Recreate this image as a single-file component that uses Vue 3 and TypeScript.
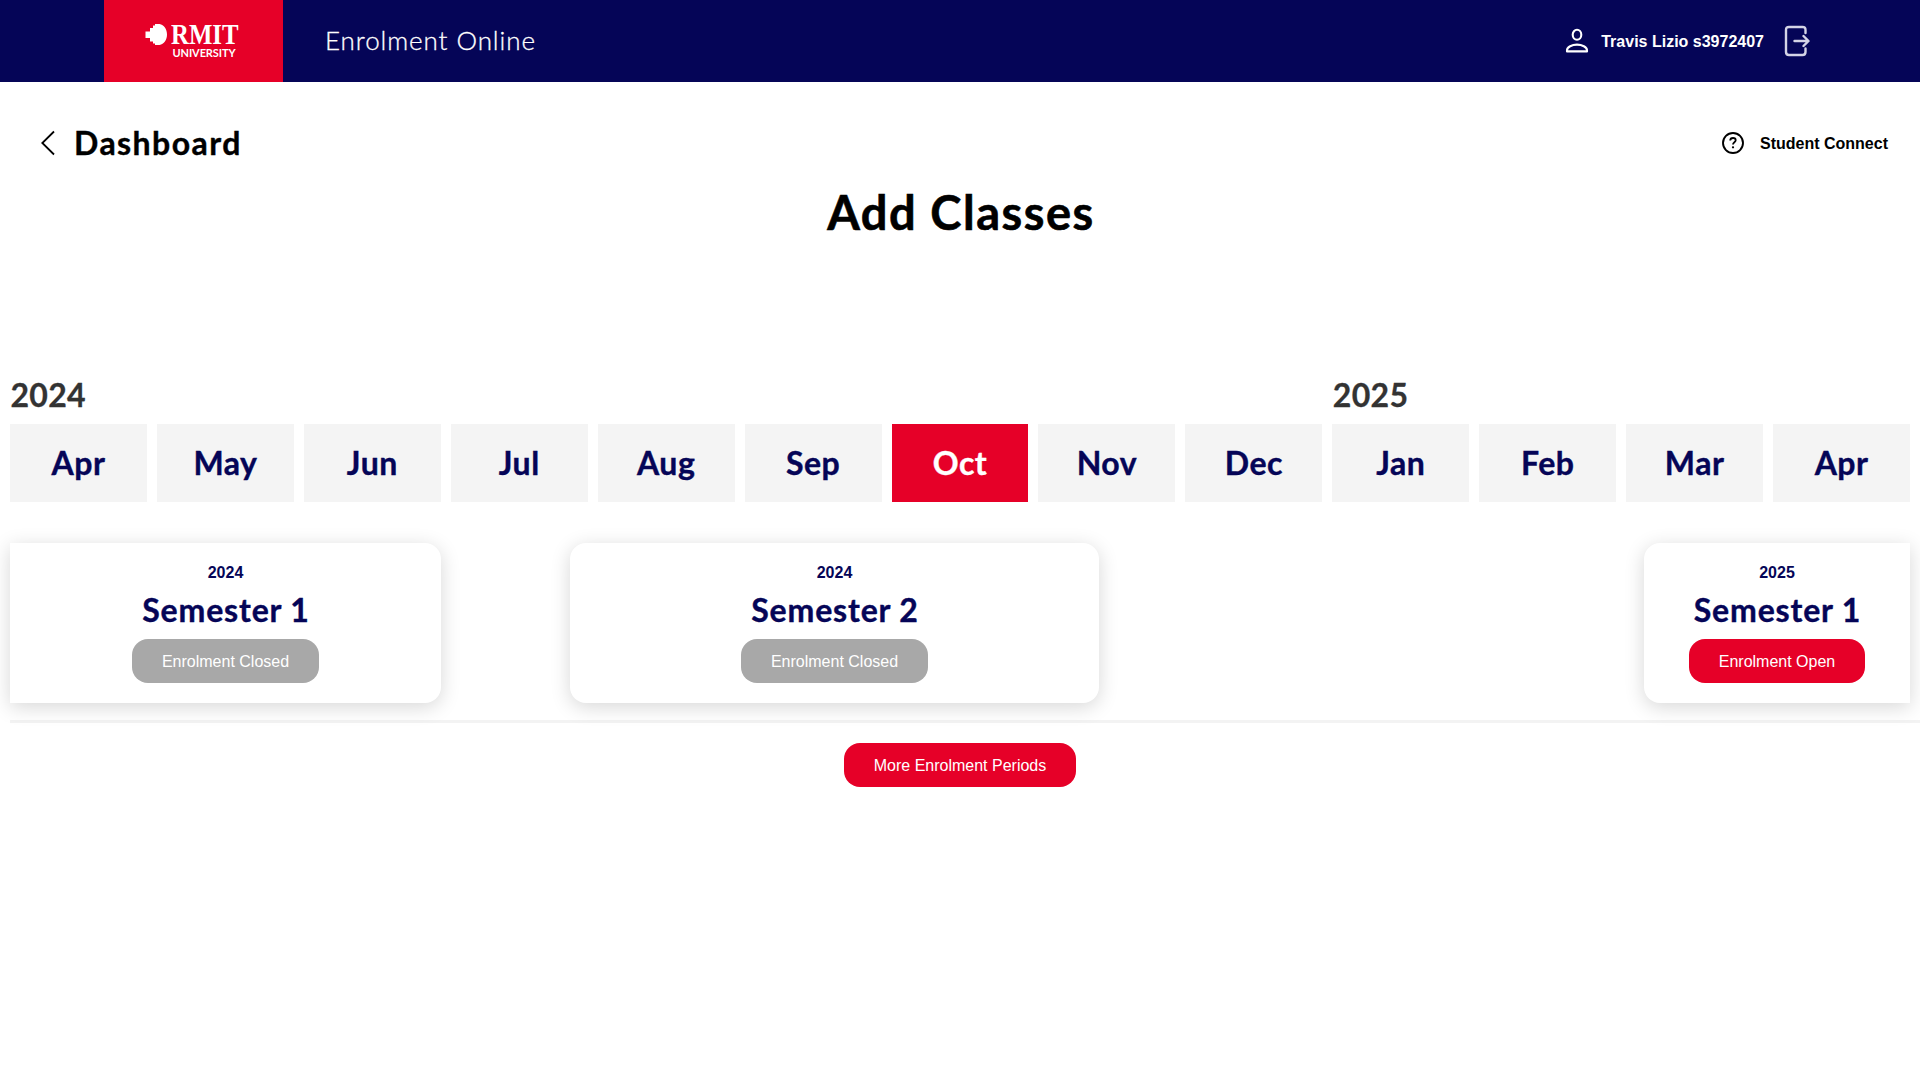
<script setup lang="ts">
interface Month {
  name: string
  year?: string
  current?: boolean
}

interface Period {
  year: string
  title: string
  status: string
  open: boolean
  edge: 'start' | 'middle' | 'end'
}

const months: Month[] = [
  { name: 'Apr', year: '2024' },
  { name: 'May' },
  { name: 'Jun' },
  { name: 'Jul' },
  { name: 'Aug' },
  { name: 'Sep' },
  { name: 'Oct', current: true },
  { name: 'Nov' },
  { name: 'Dec' },
  { name: 'Jan', year: '2025' },
  { name: 'Feb' },
  { name: 'Mar' },
  { name: 'Apr' },
]

const periods: Period[] = [
  { year: '2024', title: 'Semester 1', status: 'Enrolment Closed', open: false, edge: 'start' },
  { year: '2024', title: 'Semester 2', status: 'Enrolment Closed', open: false, edge: 'middle' },
  { year: '2025', title: 'Semester 1', status: 'Enrolment Open', open: true, edge: 'end' },
]
</script>

<template>
  <div class="page">
    <header class="topbar">
      <div class="brand">
        <svg class="brand-mark" width="23" height="22" viewBox="0 0 23 22" aria-hidden="true">
          <path
            fill="#fff"
            d="M8 1.500h2V0h4.500C19 1 22 5 22 10.500S19 20 14.500 21H10v-1.500H8v-2H5V14H.500V7.500H5V4h3z"
          />
        </svg>
        <div class="brand-text">
          <span class="brand-name">RMIT</span>
          <span class="brand-sub">UNIVERSITY</span>
        </div>
      </div>
      <span class="app-name">Enrolment Online</span>
      <div class="account">
        <svg class="user-icon" width="24" height="26" viewBox="0 0 24 26" fill="none" stroke="#fff" stroke-width="2.100">
          <ellipse cx="12" cy="6.800" rx="4.300" ry="5" />
          <path d="M2 23.400v-1.200c0-3.200 5-5.600 10-5.600s10 2.400 10 5.600v1.200z" stroke-linejoin="round" />
        </svg>
        <span class="user">Travis Lizio s3972407</span>
        <svg width="26" height="32" viewBox="0 0 26 32" fill="none" stroke="#d4d4e6" stroke-width="2.400" stroke-linecap="round" stroke-linejoin="round">
          <path d="M21.500 8V5q0-3-3-3H5Q2 2 2 5v22q0 3 3 3h13.500q3 0 3-3v-3.500" />
          <path d="M10.500 16H24M19.500 11l5 5-5 5" />
        </svg>
      </div>
    </header>

    <div class="subnav">
      <a class="back">
        <svg width="16" height="26" viewBox="0 0 16 26" fill="none" stroke="#000" stroke-width="1.800">
          <path d="M14 1.500 2.300 13 14 24.500" />
        </svg>
        <span>Dashboard</span>
      </a>
      <a class="help">
        <svg width="22" height="22" viewBox="0 0 22 22" fill="none" stroke="#000">
          <circle cx="11" cy="11" r="10" stroke-width="1.900" />
          <path d="M8.200 8.500Q8.300 6 11 6t2.700 2.300c0 1.900-2.700 2-2.700 4.200" stroke-width="1.800" />
          <circle cx="11" cy="15.300" r="1.150" fill="#000" stroke="none" />
        </svg>
        <span>Student Connect</span>
      </a>
    </div>

    <h1 class="title">Add Classes</h1>

    <section class="timeline">
      <div class="months">
        <div v-for="(m, i) in months" :key="i" class="column">
          <div class="year">{{ m.year }}</div>
          <div class="month" :class="{ current: m.current }">{{ m.name }}</div>
        </div>
      </div>
      <div class="periods">
        <article v-for="(p, i) in periods" :key="i" class="period" :class="p.edge">
          <div class="period-year">{{ p.year }}</div>
          <div class="period-title">{{ p.title }}</div>
          <button class="pill" :class="{ closed: !p.open }">{{ p.status }}</button>
        </article>
      </div>
    </section>

    <div class="more">
      <button class="pill">More Enrolment Periods</button>
    </div>
  </div>
</template>

<style>
body {
  margin: 0;
  background: #fff;
}
</style>

<style scoped>
.page {
  width: 1920px;
  height: 1080px;
  overflow: hidden;
  font-family: 'Liberation Sans', Arial, sans-serif;
  font-size: 16px;
  color: #000;
  background: #fff;
}
.topbar {
  box-sizing: border-box;
  height: 82px;
  padding: 0 110px 0 104px;
  display: flex;
  align-items: center;
  background: #050557;
  color: #fff;
}
.brand {
  box-sizing: border-box;
  width: 179px;
  height: 82px;
  padding: 24px 0 0 41px;
  display: flex;
  align-items: flex-start;
  background: #e60028;
}
.brand-mark {
  flex: none;
  margin-right: 3px;
}
.brand-text {
  display: flex;
  flex-direction: column;
  align-items: flex-start;
}
.brand-name {
  height: 20px;
  font: bold 29px/20px 'Liberation Serif', serif;
  transform: scaleX(0.855);
  transform-origin: 0 0;
}
.brand-sub {
  height: 12px;
  margin: 3px 0 0 1.500px;
  font: bold 11px/12px Lato, sans-serif;
  letter-spacing: -0.1px;
}
.app-name {
  margin-left: 42px;
  padding-bottom: 3px;
  font: 300 26px/32px Lato, sans-serif;
  letter-spacing: 0.92px;
  -webkit-text-stroke: 0.3px #fff;
}
.account {
  margin-left: auto;
  display: flex;
  align-items: center;
  font-weight: bold;
}
.user-icon {
  margin-right: 12px;
}
.user {
  margin-right: 20px;
  padding-top: 2px;
}
.subnav {
  box-sizing: border-box;
  height: 92px;
  padding: 30px 32px 0 40px;
  display: flex;
  align-items: center;
  justify-content: space-between;
}
.back,
.help {
  display: flex;
  align-items: center;
}
.back {
  gap: 18px;
  font: bold 32px/40px Lato, sans-serif;
  letter-spacing: 1.45px;
  -webkit-text-stroke: 0.4px currentColor;
}
.help {
  gap: 16px;
  font-weight: bold;
}
.help span {
  padding-top: 2px;
}
.title {
  margin: 8px 0 0;
  height: 60px;
  text-align: center;
  font: bold 47px/60px Lato, sans-serif;
  letter-spacing: 1.55px;
  text-indent: 2px;
  -webkit-text-stroke: 0.6px currentColor;
}
.timeline {
  margin: 132px 0 0 10px;
  border-bottom: 3px solid #f3f3f3;
}
.months {
  display: grid;
  grid-template-columns: repeat(13, 1fr);
  gap: 10px;
  margin-right: 10px;
}
.year {
  height: 50px;
  font: bold 32px/42px Lato, sans-serif;
  letter-spacing: 0.3px;
  text-indent: 0.5px;
  color: #333;
  -webkit-text-stroke: 0.3px currentColor;
}
.month {
  height: 78px;
  text-align: center;
  font: bold 32px/78px Lato, sans-serif;
  letter-spacing: 0.5px;
  background: #f4f4f4;
  color: #050557;
  -webkit-text-stroke: 0.4px currentColor;
}
.month.current {
  background: #e60028;
  color: #fff;
}
.periods {
  display: grid;
  grid-template-columns: 431px 129px 529px 545px 266px;
  margin: 41px 0 17px;
}
.period {
  box-sizing: border-box;
  height: 160px;
  padding-top: 20px;
  display: flex;
  flex-direction: column;
  align-items: center;
  background: #fff;
  color: #050557;
  box-shadow: 0 4px 20px rgba(0, 0, 0, 0.16);
}
.start {
  grid-column: 1;
  border-radius: 0 16px 16px 0;
}
.middle {
  grid-column: 3;
  border-radius: 16px;
}
.end {
  grid-column: 5;
  border-radius: 16px 0 0 16px;
}
.period-year {
  font-weight: bold;
  line-height: 20px;
}
.period-title {
  height: 40px;
  margin: 7px 0 9px;
  font: bold 32px/40px Lato, sans-serif;
  letter-spacing: 0.85px;
  text-indent: 1px;
  -webkit-text-stroke: 0.4px currentColor;
}
.pill {
  height: 44px;
  padding: 2px 30px 0;
  border: 0;
  border-radius: 16px;
  font: 16px 'Liberation Sans', Arial, sans-serif;
  color: #fff;
  background: #e60028;
}
.pill.closed {
  background: #a8a8a8;
}
.more {
  display: flex;
  justify-content: center;
  padding-top: 20px;
}
</style>
